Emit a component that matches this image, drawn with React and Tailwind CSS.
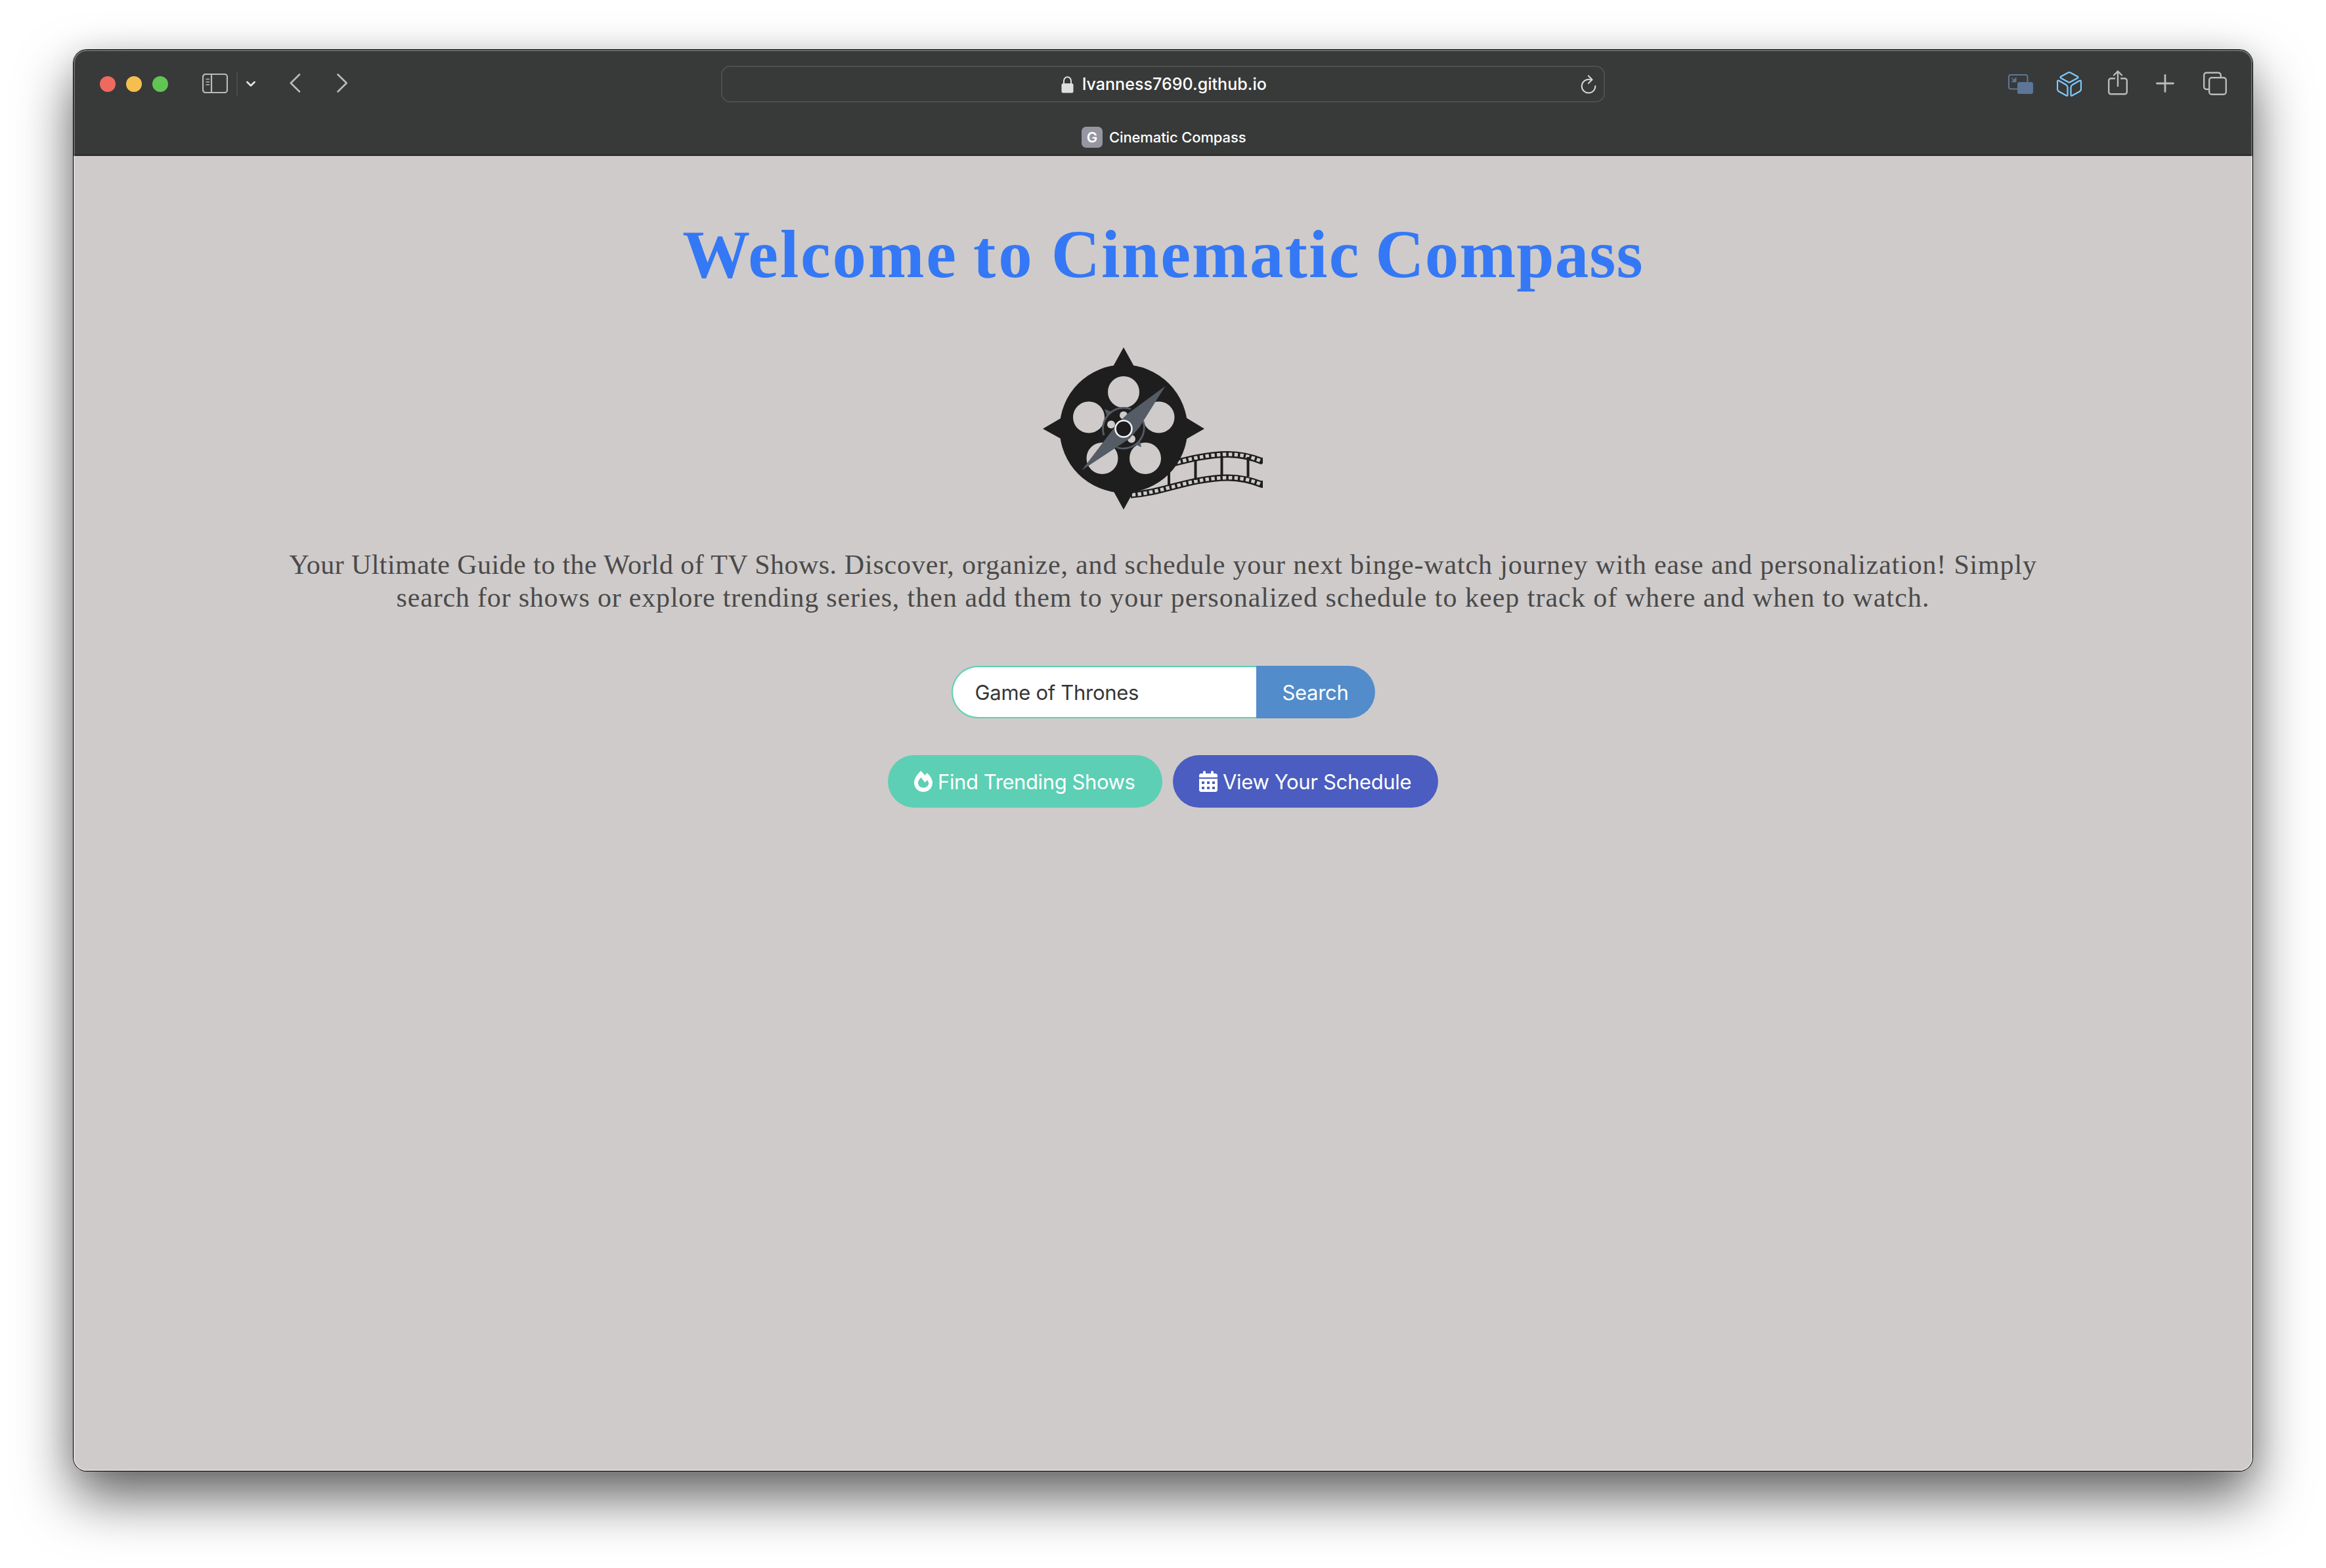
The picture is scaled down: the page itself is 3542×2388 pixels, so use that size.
import React from "react";
import { FaCalendarDays } from "react-icons/fa6";

const line = { fill: "none", stroke: "#b9bab9", strokeLinecap: "round", strokeLinejoin: "round" };

function Toolbar() {
  return (
    <header className="flex h-[160px] flex-col bg-[#383a39] font-[Inter,sans-serif]">
      <div className="flex h-[104px] items-center">
        <div className="flex w-[986px] items-center pl-[40px]">
          <div className="flex gap-4">
            <span className="size-6 rounded-full bg-[#ee6a5f]" />
            <span className="size-6 rounded-full bg-[#f5bf4f]" />
            <span className="size-6 rounded-full bg-[#61c554]" />
          </div>
          <svg className="mb-[2px] ml-[52px] h-[30px] w-[39px]" viewBox="0 0 39 30" {...line}>
            <rect x="1" y="1" width="37" height="28" rx="4" strokeWidth="2.2" />
            <path d="M14 1V29" strokeWidth="2.2" />
            <path d="M6 8.5h4.500M6 12.700h4.500M6 17h4.500" strokeWidth="1.500" />
          </svg>
          <span className="ml-[13px] h-9 w-[2px] bg-[#4a4c4b]" />
          <svg className="mb-[1px] ml-[13px] h-[10px] w-[14px]" viewBox="0 0 14 10" {...line} stroke="#e4e4e4">
            <path d="M1.500 2L7 7.500L12.500 2" strokeWidth="2.600" />
          </svg>
          <svg className="mb-[3px] ml-[52px] h-[29px] w-[17px]" viewBox="0 0 17 29" {...line}>
            <path d="M15 1.500L1.800 14.500L15 27.500" strokeWidth="2.600" />
          </svg>
          <svg className="mb-[3px] ml-[55px] h-[29px] w-[17px]" viewBox="0 0 17 29" {...line}>
            <path d="M1.500 1.500L14.700 14.500L1.500 27.500" strokeWidth="2.600" />
          </svg>
        </div>
        <div className="flex h-[56px] w-[1346px] items-center rounded-[14px] border-2 border-[#4d4f4e]">
          <div className="flex flex-1 items-center pl-[516px] pt-[2px]">
            <svg className="h-[26px] w-[19px]" viewBox="0 0 19 26">
              <rect x="0.500" y="11" width="18" height="14.500" rx="2.500" fill="#dfdfdf" />
              <path d="M4 12V7a5.500 5.700 0 0 1 11 0V12" fill="none" stroke="#dfdfdf" strokeWidth="2" />
            </svg>
            <span className="ml-[13px] whitespace-nowrap text-[25px] font-medium tracking-[0.05px] text-white">lvanness7690.github.io</span>
          </div>
          <svg className="mr-[10px] h-[30px] w-[26px]" viewBox="0 0 26 30" {...line} stroke="#d8d8d8">
            <path d="M17.500 8.700Q15.500 8 12.800 8A10.300 10.300 0 1 0 23.300 18" strokeWidth="2" />
            <path d="M12.800 2.500L18.500 8.200L12.800 13.900" strokeWidth="2" />
          </svg>
        </div>
        <div className="flex flex-1 items-center">
          <svg className="ml-[614px] h-[30px] w-[38px]" viewBox="0 0 38 30">
            <path d="M14 22.500H4a3 3 0 0 1-3-3V4a3 3 0 0 1 3-3H26.500a3 3 0 0 1 3 3V12" fill="none" stroke="#5d7698" strokeWidth="2" />
            <rect x="14" y="12" width="24" height="18" rx="3" fill="#5d7698" />
            <path d="M5 5.500L10 10M11.800 6V11.500H6.200Z" fill="#5d7698" stroke="#5d7698" strokeWidth="1.400" />
          </svg>
          <svg className="ml-[36px] h-[38px] w-[38px]" viewBox="0 0 38 38" fill="none" stroke="#7fcbff" strokeWidth="2.200" strokeLinejoin="round">
            <path d="M17.500 1.500Q19 .8 20.500 1.500L31.500 7.500Q33.500 8.700 31.500 10L20.500 16Q19 16.800 17.500 16L6.500 10Q4.500 8.700 6.500 7.500Z" />
            <path d="M3.500 14L14 20Q16.500 21.500 16.500 24V35.500Q16.500 37.500 14.500 36.500L3.500 30.500Q1 29 1 26.500V15.500Q1 12.800 3.500 14Z" />
            <path d="M34.500 14L24 20Q21.500 21.500 21.500 24V35.500Q21.500 37.500 23.500 36.500L34.500 30.500Q37 29 37 26.500V15.500Q37 12.800 34.500 14Z" />
          </svg>
          <svg className="mb-[4px] ml-[40px] h-[38px] w-[30px]" viewBox="0 0 30 38" {...line} strokeWidth="2.400">
            <path d="M10 12.500H4.500a3.300 3.300 0 0 0-3.300 3.300V33A3.300 3.300 0 0 0 4.500 36.300H25.500A3.300 3.300 0 0 0 28.800 33V15.800A3.300 3.300 0 0 0 25.500 12.500H20" />
            <path d="M15 24V1.500M9 7.500L15 1.500L21 7.500" />
          </svg>
          <svg className="mb-[3px] ml-[43px] h-[28px] w-[28px]" viewBox="0 0 28 28" {...line} strokeWidth="2.800">
            <path d="M14 1.500V26.500M1.500 14H26.500" />
          </svg>
          <svg className="mb-[3px] ml-[44px] h-[36px] w-[36px]" viewBox="0 0 36 36" {...line} strokeWidth="2.400">
            <path d="M9 27H5a3.800 3.800 0 0 1-3.800-3.800V5.500A3.800 3.800 0 0 1 5 1.700H23A3.800 3.800 0 0 1 26.800 5.500V9" />
            <rect x="9.200" y="9.200" width="25.600" height="25.600" rx="3.800" />
          </svg>
        </div>
      </div>
      <div className="flex h-[56px] items-center pl-[1535px] pt-[2px]">
        <span className="flex size-8 items-center justify-center rounded-[7px] bg-[#9695a2] pt-[1px] text-[22px] font-semibold text-white">G</span>
        <span className="ml-[10px] whitespace-nowrap text-[22px] font-medium tracking-[-0.12px] text-white">Cinematic Compass</span>
      </div>
    </header>
  );
}

const RAIL = "M155 254C205 253 250 228 310 227.500C330 227.500 345 231 363 238.500";

// A film rail: dark band with a row of light perforations.
function Rail({ transform }) {
  return (
    <g fill="none" transform={transform}>
      <path d={RAIL} stroke="#1e1e1e" strokeWidth="10" />
      <path d={RAIL} stroke="#cfcbca" strokeWidth="5.400" strokeDasharray="5.400 3.400" />
    </g>
  );
}

function Logo() {
  return (
    <svg className="h-[300px] w-[400px]" viewBox="0 0 400 300">
      <defs>
        <clipPath id="strip"><path d="M162 140H363V263H162Z" /></clipPath>
      </defs>
      <g clipPath="url(#strip)">
        <Rail />
        <Rail transform="translate(0 -35.500)" />
        <path d="M220 215V239M260.500 200V231M300.500 194V225M340.500 196V226" stroke="#1e1e1e" strokeWidth="4" />
        <path d="M362 197V206M362 232V243" stroke="#1e1e1e" strokeWidth="2.200" />
      </g>
      <circle cx="151" cy="153" r="97.500" fill="#1e1e1e" />
      <path d="M151 29L167 58H135ZM151 276L167 247H135ZM28 153L57 136V169ZM274 153L246 136V169Z" fill="#1e1e1e" />
      <g fill="#cfcbca">
        <circle cx="151" cy="97" r="24" />
        <circle cx="98" cy="135.500" r="24" />
        <circle cx="204.500" cy="135.500" r="24" />
        <circle cx="118.500" cy="198" r="24" />
        <circle cx="184" cy="198" r="24" />
      </g>
      <circle cx="151" cy="153" r="32" fill="#1e1e1e" />
      <g fill="none" stroke="#555c65" strokeWidth="2.800">
        <path d="M121 163A32 32 0 0 1 162 123M140.500 181.500A32 32 0 0 0 181 142" />
      </g>
      <path d="M122 123L132 127L126 134ZM178 181L169 177L176 171Z" fill="#555c65" />
      <g fill="#cfcbca">
        <circle cx="151" cy="132.500" r="6" />
        <circle cx="132" cy="146.500" r="6" />
        <circle cx="170" cy="147" r="6" />
        <circle cx="163" cy="168.500" r="6" />
      </g>
      <path d="M214.500 88L156 131L140 147L87.500 216L160 168L175 151Z" fill="#555c65" />
      <circle cx="151" cy="153" r="12.500" fill="#1c1c1d" stroke="#f4f4f4" strokeWidth="2.600" />
    </svg>
  );
}

function Flame() {
  return (
    <svg className="mr-2 h-8 w-7" viewBox="0 0 28 32" fill="currentColor" fillRule="evenodd">
      <path d="M10.300 0Q13.500 3 16.300 6.700L19.700 3.300C24.500 7.500 28 13 28 18C28 26 21.800 32 14 32S0 26 0 18C0 12 4.500 5.300 10.300 0ZM10.300 10C7.500 13.500 6 16 6 18.300C6 22.500 9.500 25.700 14 25.700S22.200 22.500 22.200 18.700Q22 16.500 20.200 14L16.600 17.800Z" />
    </svg>
  );
}

function Page() {
  return (
    <main className="flex flex-1 flex-col items-center bg-[#cfcbca]">
      <h1 className="mt-[89px] h-[121px] whitespace-nowrap font-['Liberation_Serif',serif] text-[103px] font-bold leading-[120px] [word-spacing:-5px] text-[#3478f6]">
        <span className="tracking-[2.700px]">Welcome </span>
        <span className="tracking-[4px]">to </span>
        <span className="tracking-[2.100px]">Cinematic </span>
        <span className="tracking-[1.100px]">Compass</span>
      </h1>
      <div className="mt-[52px] mr-[22px]"><Logo /></div>
      <p className="mt-[35px] text-center whitespace-nowrap font-['Liberation_Serif',serif] text-[42px] leading-[50px] text-[#4a4a4a]">
        <span className="block tracking-[0.83px]"><span className="tracking-[0.43px]">Your Ultimate Guide to the World of TV Shows.</span> Discover, organize, and schedule your next binge-watch journey with ease and personalization! Simply</span>
        <span className="block tracking-[1px]"><span className="tracking-[0.8px]">search for shows or explore trending series,</span> then add them to your personalized schedule to keep track of where and when to watch.</span>
      </p>
      <div className="mt-[79px] flex h-20 font-[Inter,sans-serif] text-[31px]">
        <div className="flex w-[464px] items-center rounded-l-full border-2 border-r-0 border-[#5dcfb4] bg-white pl-[34px] pt-[2px] tracking-[-0.3px] text-[#363636] shadow-[inset_0_2px_4px_rgba(10,10,10,0.05)]">Game of Thrones</div>
        <button className="w-[181px] rounded-r-full bg-[#528ccb] pt-[2px] tracking-[-0.3px] text-white">Search</button>
      </div>
      <div className="mt-[56px] flex gap-4 font-[Inter,sans-serif] text-[31px] text-white">
        <button className="flex h-20 w-[418px] items-center whitespace-nowrap rounded-full bg-[#5dcfb4] pl-10 tracking-[-0.4px]"><Flame /><span className="pt-[2px]">Find Trending Shows</span></button>
        <button className="flex h-20 w-[404px] items-center whitespace-nowrap rounded-full bg-[#4b5dc0] pl-10 tracking-[-0.34px]"><FaCalendarDays className="mr-2 h-8 w-7" /><span className="pt-[2px]">View Your Schedule</span></button>
      </div>
    </main>
  );
}

export default function App() {
  return (
    <div className="h-[2388px] w-[3542px] overflow-hidden bg-white pl-[112px] pt-[76px]">
      <div className="relative flex h-[2164px] w-[3318px] flex-col overflow-hidden rounded-[20px] shadow-[0_0_0_1px_#000,0_40px_84px_rgba(0,0,0,0.62),0_0_40px_rgba(0,0,0,0.08)]">
        <Toolbar />
        <div className="h-[2px] border-b border-[#969494] bg-black" />
        <Page />
        <div className="pointer-events-none absolute inset-0 rounded-[20px] border-2 border-white/25" />
      </div>
    </div>
  );
}
